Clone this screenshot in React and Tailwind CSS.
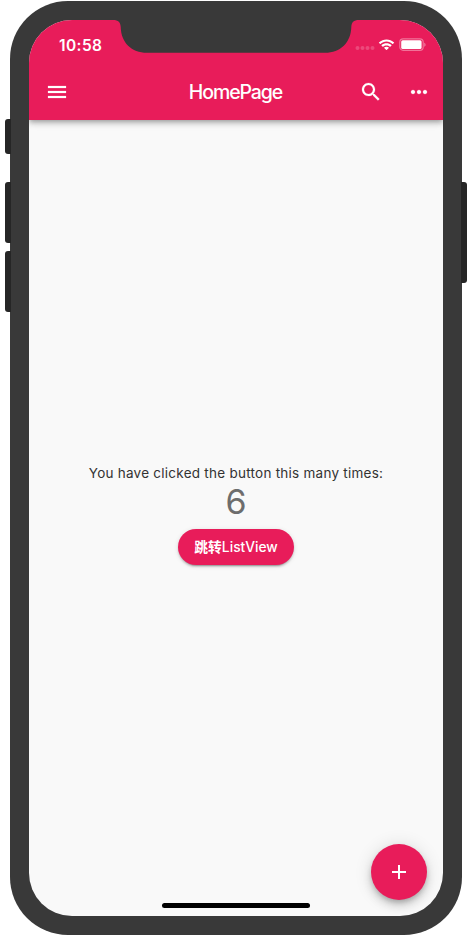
import React from "react";

function StatusBar() {
  return (
    <div className="flex h-11 items-center justify-between pt-[5px] pr-[17px] pl-[30px]">
      <span className="mt-[2px] w-[44px] text-[15.5px] leading-5 font-semibold tracking-[0.4px] whitespace-nowrap">10:58</span>
      <div className="flex items-center">
        <svg width="20" height="6" viewBox="0 0 20 6" className="mt-[7px] mr-[3px]" fill="#fff" fillOpacity="0.2">
          <circle cx="2.5" cy="3" r="2" />
          <circle cx="7.5" cy="3" r="2" />
          <circle cx="12.5" cy="3" r="2" />
          <circle cx="17.5" cy="3" r="2" />
        </svg>
        <svg width="17" height="12" viewBox="0 0 17 12" className="mr-1" fill="#fff">
          <path d="M8.5 2.6c2.3 0 4.4.9 6 2.4.1.1.3.1.4 0l1.2-1.2c.1-.1.1-.3 0-.4-4.2-4-10.9-4-15.2 0-.1.1-.1.3 0 .4L2.1 5c.1.1.3.1.4 0 1.6-1.5 3.7-2.4 6-2.4z" />
          <path d="M8.5 6.4c1.3 0 2.5.5 3.4 1.3.1.1.3.1.4 0l1.2-1.2c.1-.1.1-.3 0-.4-2.8-2.6-7.2-2.6-10 0-.1.1-.1.3 0 .4l1.2 1.2c.1.1.3.1.4 0 .9-.8 2.1-1.3 3.4-1.3z" />
          <path d="M10.8 9c.1-.1.1-.3 0-.4-1.3-1.1-3.3-1.1-4.6 0-.1.1-.1.3 0 .4l2.1 2.1c.1.1.3.1.4 0z" />
        </svg>
        <svg width="27" height="13" viewBox="0 0 27 13" fill="none">
          <rect x="0.8" y="0.9" width="23.4" height="11.4" rx="3.3" stroke="#fff" strokeOpacity="0.38" strokeWidth="1.2" />
          <rect x="2.2" y="2.3" width="20.4" height="8.6" rx="1.5" fill="#fff" />
          <path d="M25.3 4.7v4c.7-.3 1.2-1.1 1.2-2s-.5-1.7-1.2-2z" fill="#fff" fillOpacity="0.45" />
        </svg>
      </div>
    </div>
  );
}

function IconButton({ label, path }) {
  return (
    <button aria-label={label} className="flex size-12 items-center justify-center">
      <svg width="24" height="24" viewBox="0 0 24 24" fill="#fff" stroke="#fff" strokeWidth="0.2">
        <path d={path} />
      </svg>
    </button>
  );
}

function Toolbar() {
  return (
    <div className="grid h-14 grid-cols-[96px_1fr_96px] items-center">
      <div className="pl-1">
        <IconButton label="Menu" path="M3 18h18v-2H3v2zm0-5h18v-2H3v2zm0-7v2h18V6H3z" />
      </div>
      <h1 className="pr-px text-center text-[19.5px] leading-6 font-medium tracking-[-1.1px]">HomePage</h1>
      <div className="flex">
        <IconButton
          label="Search"
          path="M15.5 14h-.79l-.28-.27C15.41 12.59 16 11.11 16 9.5 16 5.91 13.09 3 9.5 3S3 5.91 3 9.5 5.91 16 9.5 16c1.61 0 3.09-.59 4.23-1.57l.27.28v.79l5 4.99L20.49 19l-4.99-5zm-6 0C7.01 14 5 11.99 5 9.5S7.01 5 9.5 5 14 7.01 14 9.5 11.99 14 9.5 14z"
        />
        <IconButton
          label="More"
          path="M6 10c-1.1 0-2 .9-2 2s.9 2 2 2 2-.9 2-2-.9-2-2-2zm12 0c-1.1 0-2 .9-2 2s.9 2 2 2 2-.9 2-2-.9-2-2-2zm-6 0c-1.1 0-2 .9-2 2s.9 2 2 2 2-.9 2-2-.9-2-2-2z"
        />
      </div>
    </div>
  );
}

function Phone({ children }) {
  return (
    <div className="relative h-[934px] w-[452px] rounded-[58px] bg-[#393939] p-[19px]">
      <div className="absolute top-[118px] -left-[5px] h-[35px] w-[6px] rounded-l-[3px] bg-[#262626]" />
      <div className="absolute top-[181px] -left-[5px] h-[61px] w-[6px] rounded-l-[3px] bg-[#262626]" />
      <div className="absolute top-[250px] -left-[5px] h-[61px] w-[6px] rounded-l-[3px] bg-[#262626]" />
      <div className="absolute top-[181px] -right-[5px] h-[101px] w-[6px] rounded-r-[3px] bg-[#262626]" />
      <div className="relative flex h-[896px] w-[414px] flex-col overflow-hidden rounded-[43px] bg-[#f9f9f9]">
        {children}
        <svg className="absolute top-0 left-[84px]" width="246" height="33" viewBox="0 0 246 33" fill="#393939">
          <path d="M0 0H246C240.5 0 238.5 2.5 238.3 7C238 22.5 227.5 32.8 212 32.8H34C18.5 32.8 8 22.5 7.7 7C7.5 2.5 5.5 0 0 0Z" />
        </svg>
        <div className="absolute bottom-2 left-[133px] h-[5px] w-[148px] rounded-full bg-black" />
      </div>
    </div>
  );
}

export default function App() {
  return (
    <div className="flex h-[936px] w-[472px] justify-center overflow-hidden bg-white pt-px font-[Inter,'Noto_Sans_CJK_SC',sans-serif]">
      <Phone>
        <header className="h-[100px] shrink-0 bg-[#e81c5a] text-white shadow-[0_2px_4px_-1px_rgba(0,0,0,0.2),0_4px_5px_0_rgba(0,0,0,0.14),0_1px_10px_0_rgba(0,0,0,0.12)]">
          <StatusBar />
          <Toolbar />
        </header>
        <main className="flex flex-1 flex-col items-center justify-center">
          <p className="h-[17px] text-[13.5px] leading-[16px] tracking-[0.25px] whitespace-nowrap text-[#333]">
            You have clicked the button this many times:
          </p>
          <p className="h-[41px] text-[34px] leading-[39px] text-[#6d6d6d]">6</p>
          <button className="my-1.5 flex h-9 w-[116px] items-center justify-center rounded-full bg-[#e81c5a] text-[13.8px] leading-5 font-medium whitespace-nowrap text-white shadow-[0_3px_1px_-2px_rgba(0,0,0,0.2),0_2px_2px_0_rgba(0,0,0,0.14),0_1px_5px_0_rgba(0,0,0,0.12)]">
            <span className="font-bold">跳转</span>ListView
          </button>
        </main>
        <button
          aria-label="Add"
          className="absolute right-4 bottom-4 flex size-14 items-center justify-center rounded-full bg-[#e81c5a] shadow-[0_3px_5px_-1px_rgba(0,0,0,0.2),0_6px_10px_0_rgba(0,0,0,0.14),0_1px_18px_0_rgba(0,0,0,0.12)]"
        >
          <svg width="24" height="24" viewBox="0 0 24 24" fill="#fff">
            <path d="M19 13h-6v6h-2v-6H5v-2h6V5h2v6h6v2z" />
          </svg>
        </button>
      </Phone>
    </div>
  );
}
